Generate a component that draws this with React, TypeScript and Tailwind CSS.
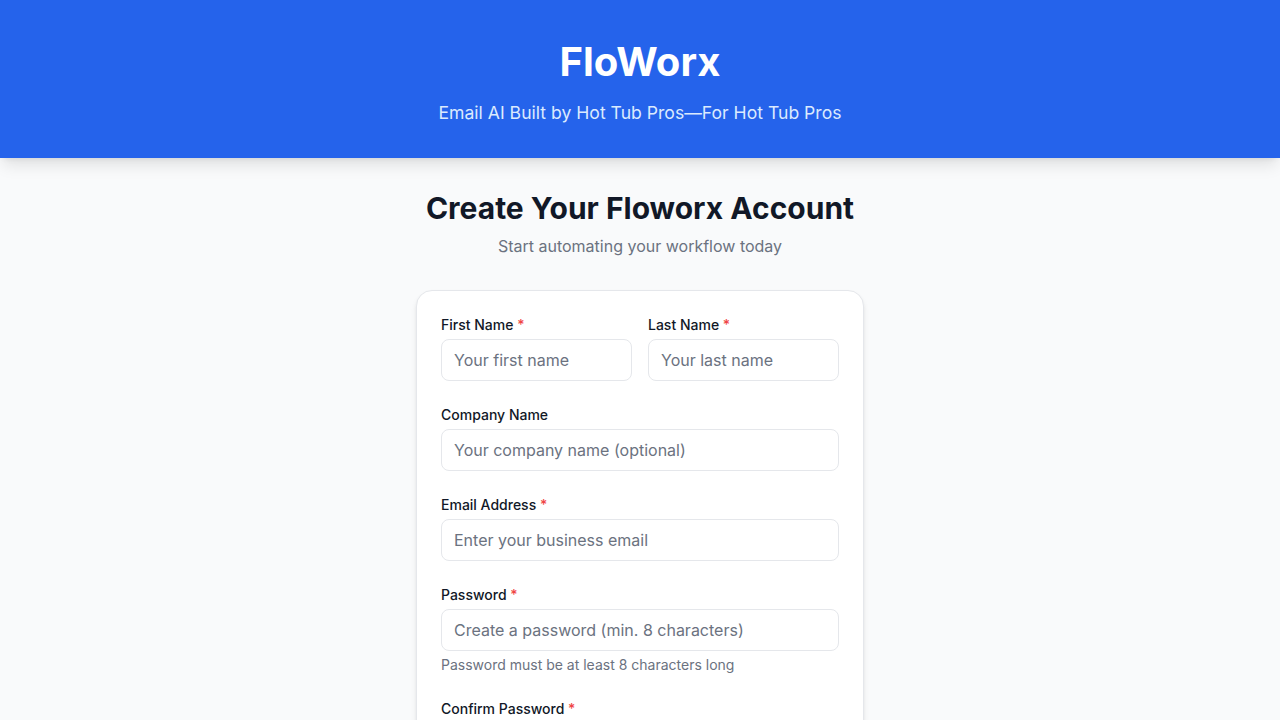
import React, { useState } from 'react';

const Field: React.FC<{
  label: string;
  placeholder: string;
  required?: boolean;
  type?: string;
  hint?: string;
}> = ({ label, placeholder, required, type = 'text', hint }) => (
  <div>
    <label className="block text-sm font-medium text-[#111827] mb-1">
      {label}
      {required && <span className="text-[#ef4444]"> *</span>}
    </label>
    <input
      type={type}
      placeholder={placeholder}
      className="w-full px-3 py-2 text-base border border-[#e5e7eb] rounded-lg bg-white text-[#111827] placeholder:text-[#6b7280] outline-none focus:ring-2 focus:ring-[#3b82f6]"
    />
    {hint && <p className="mt-1 text-sm text-[#6b7280]">{hint}</p>}
  </div>
);

const App: React.FC = () => {
  const [agree, setAgree] = useState(false);

  return (
    <div className="min-h-screen bg-[#f9fafb] font-['Inter',sans-serif]">
      <header className="bg-[#2563eb] text-center pt-[40px] pb-[31px] shadow-lg">
        <h1 className="text-[40px] leading-[44px] font-bold text-white">FloWorx</h1>
        <p className="mt-[15px] text-[17.6px] leading-7 text-[#dbeafe]">Email AI Built by Hot Tub Pros—For Hot Tub Pros</p>
      </header>

      <main className="px-4 pt-8 pb-12">
        <div className="text-center">
          <h2 className="text-3xl font-bold text-[#111827]">Create Your Floworx Account</h2>
          <p className="mt-2 text-base text-[#6b7280]">Start automating your workflow today</p>
        </div>

        <div className="mt-8 mx-auto w-full max-w-md bg-white border border-[#e5e7eb] rounded-2xl shadow-md p-6">
          <form className="space-y-6" onSubmit={(e) => e.preventDefault()}>
            <div className="grid grid-cols-2 gap-4">
              <Field label="First Name" placeholder="Your first name" required />
              <Field label="Last Name" placeholder="Your last name" required />
            </div>
            <Field label="Company Name" placeholder="Your company name (optional)" />
            <Field label="Email Address" placeholder="Enter your business email" type="email" required />
            <Field
              label="Password"
              placeholder="Create a password (min. 8 characters)"
              type="password"
              required
              hint="Password must be at least 8 characters long"
            />
            <Field label="Confirm Password" placeholder="Confirm your password" type="password" required />

            <label className="flex items-center gap-2 text-sm text-[#374151]">
              <input type="checkbox" checked={agree} onChange={() => setAgree(!agree)} />
              I agree to the Terms of Service and Privacy Policy
            </label>

            <button
              type="submit"
              className="w-full bg-[#2563eb] hover:bg-[#1d4ed8] text-white py-2.5 rounded-lg font-semibold"
            >
              Create Account
            </button>
          </form>
        </div>
      </main>
    </div>
  );
};

export default App;
